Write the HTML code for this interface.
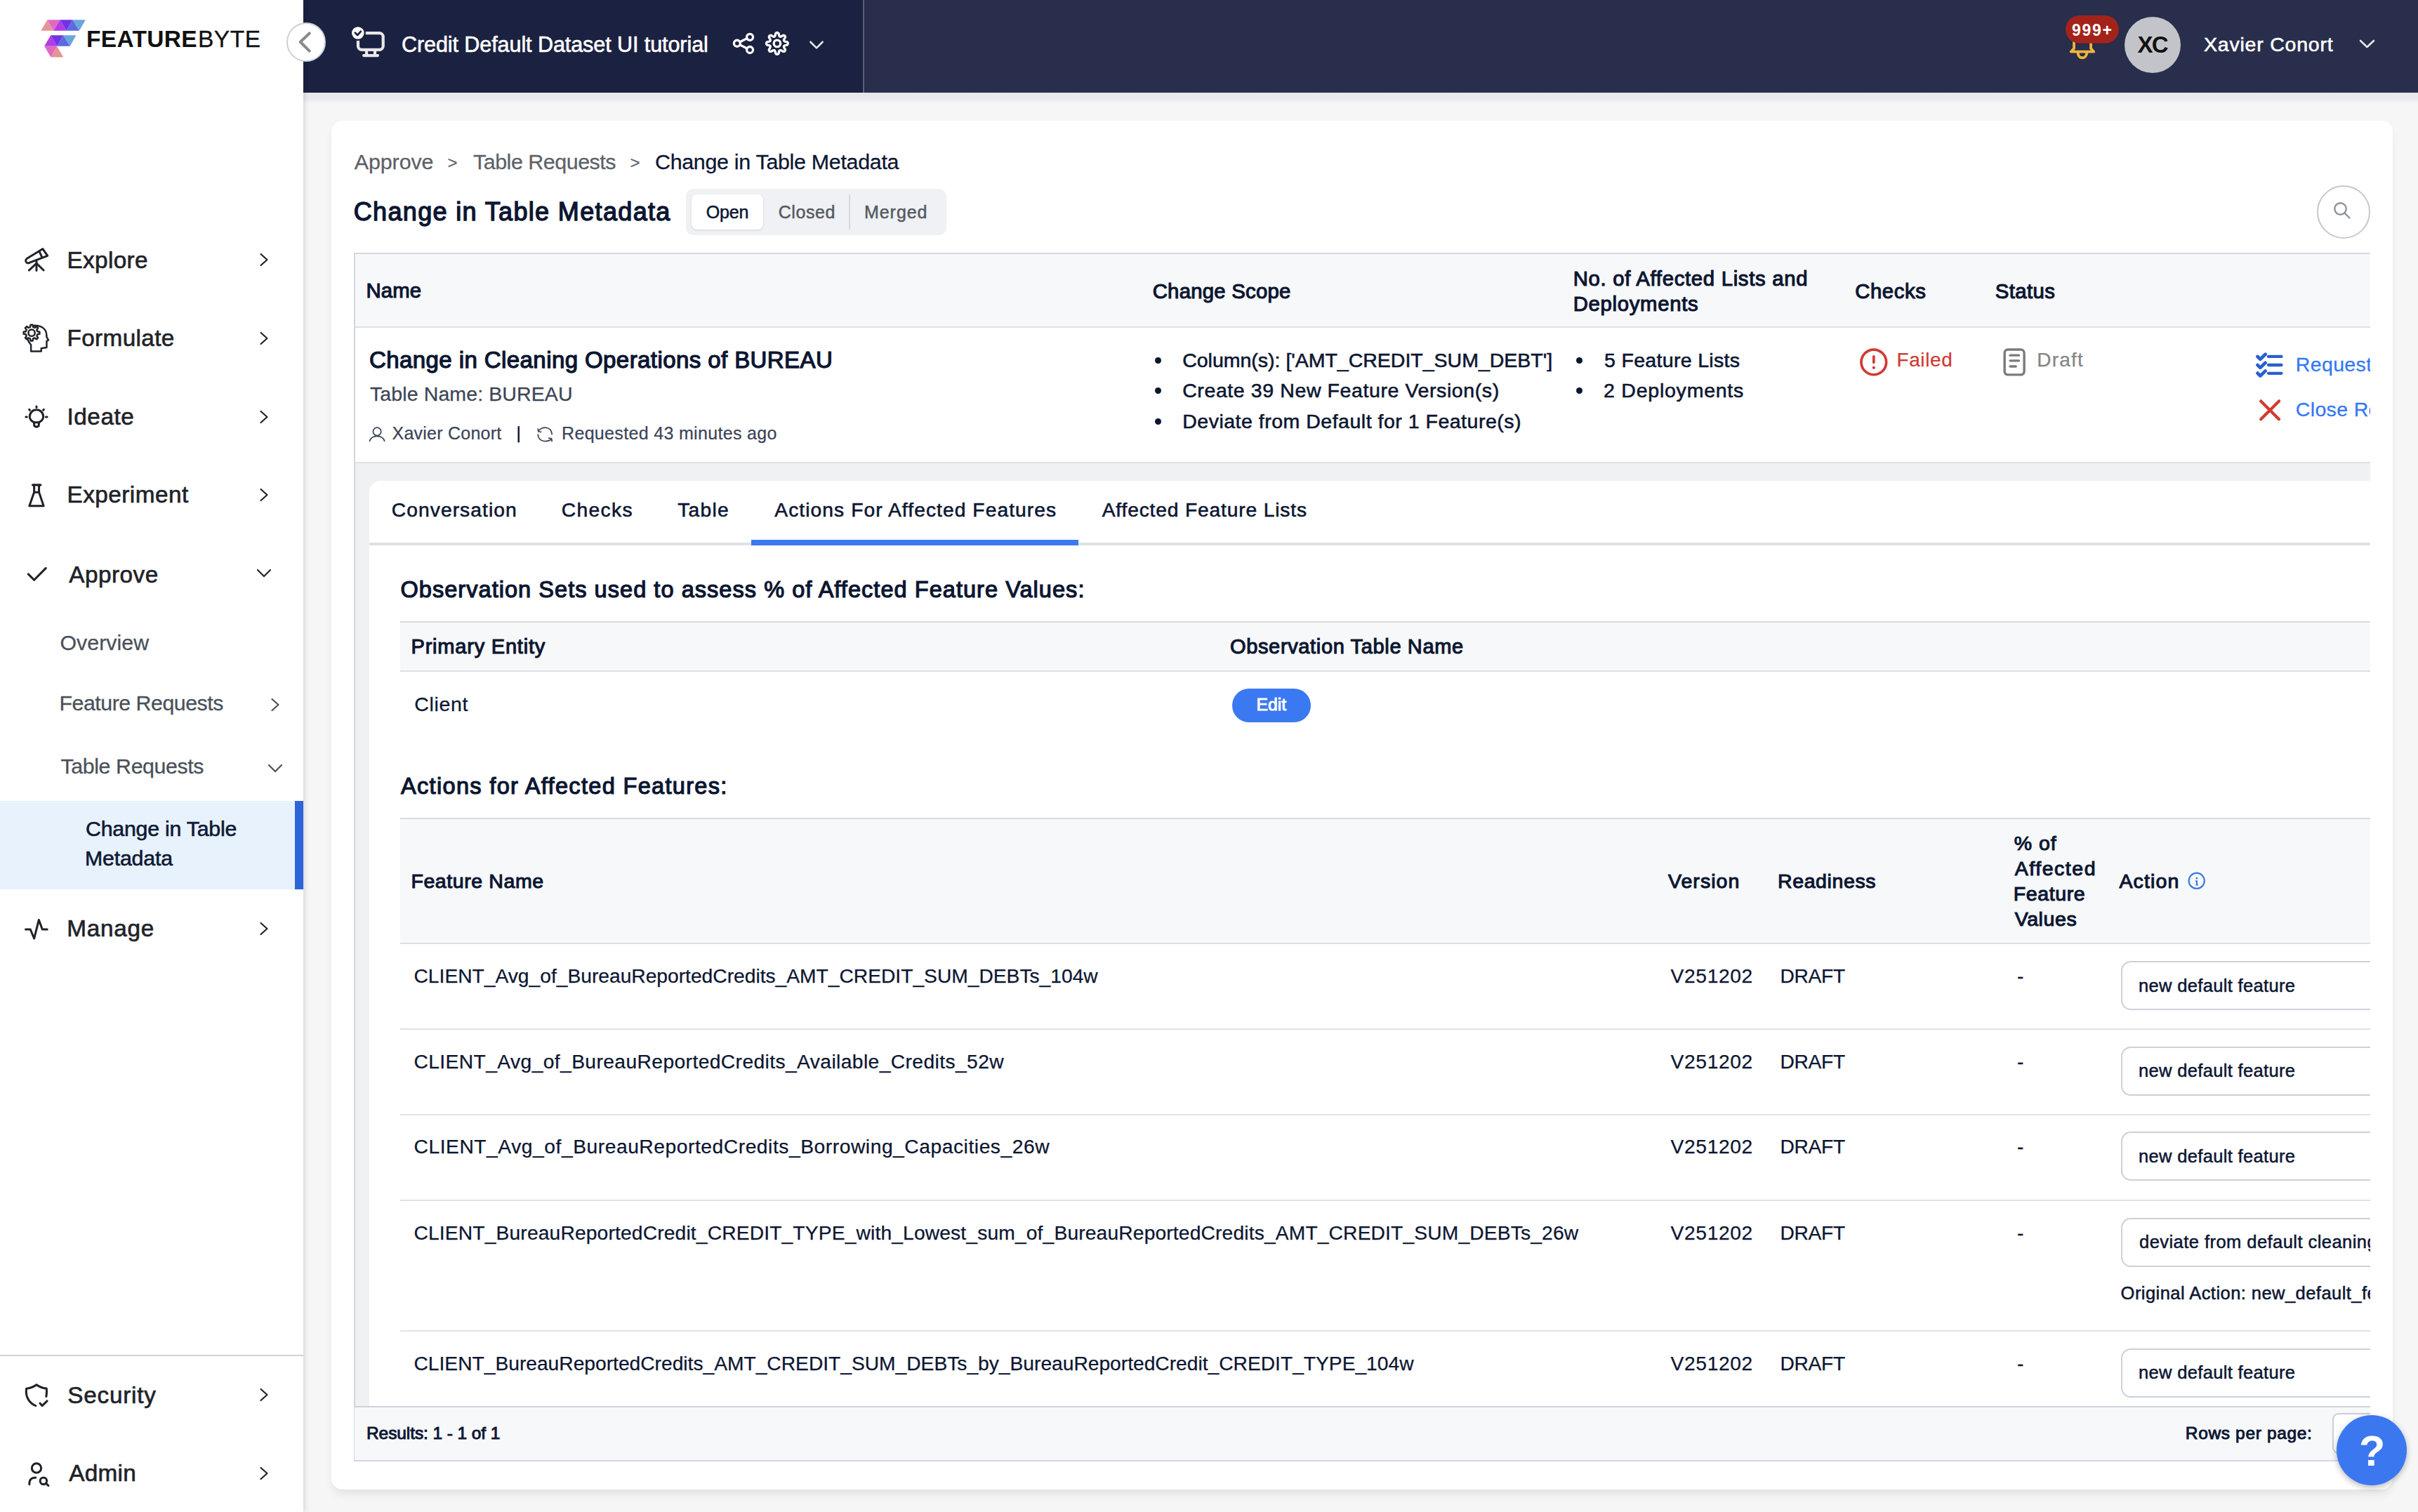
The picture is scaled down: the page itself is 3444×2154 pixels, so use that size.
<!DOCTYPE html>
<html><head><meta charset="utf-8">
<style>
html,body{margin:0;padding:0;}
body{width:3444px;height:2154px;position:relative;overflow:hidden;background:#f6f6f7;font-family:"Liberation Sans",sans-serif;}
.a{position:absolute;}
.t{position:absolute;white-space:nowrap;}
svg{position:absolute;overflow:visible;}
.sel{width:420px;height:70px;border:2px solid #ccd1d8;border-radius:14px;box-sizing:border-box;background:#fff;}
.dot{width:9px;height:9px;border-radius:50%;background:#0c1631;}
.ic{fill:none;stroke:#1f2329;stroke-width:74;stroke-linecap:round;stroke-linejoin:round;}
</style></head><body>

<!-- page shadow under header -->
<div class="a" style="left:432px;top:132px;width:3012px;height:16px;background:linear-gradient(#e6e7eb 0px,#e9eaee 9px,#f6f6f7 15px);"></div>

<!-- main card -->
<div class="a" style="left:472px;top:172px;width:2936px;height:1950px;background:#fff;border-radius:16px;box-shadow:0 9px 14px -3px rgba(0,0,0,0.085);"></div>

<!-- header -->
<div class="a" style="left:432px;top:0;width:798px;height:132px;background:#1b2140;"></div>
<div class="a" style="left:1229px;top:0;width:2px;height:132px;background:#5b6172;"></div>
<div class="a" style="left:1231px;top:0;width:2213px;height:132px;background:#282e4b;"></div>

<!-- sidebar -->
<div class="a" style="left:0;top:0;width:432px;height:2154px;background:#fff;box-shadow:1px 0 8px rgba(0,0,0,0.17);"></div>
<div class="a" style="left:0;top:1141px;width:420px;height:126px;background:#e8f2fd;"></div>
<div class="a" style="left:420px;top:1141px;width:12px;height:126px;background:#2d64d8;"></div>
<div class="a" style="left:0;top:1929.5px;width:432px;height:2px;background:#cdd2da;"></div>

<!-- logo -->
<svg style="left:50px;top:20px;" width="80" height="70" viewBox="0 0 1728 1512">
<polygon fill="#e49595" points="180,512 378,178 570,512"/>
<polygon fill="#e069c1" points="378,178 765,178 570,512"/>
<polygon fill="#b03de6" points="570,512 765,178 965,512"/>
<polygon fill="#7232e6" points="765,178 1155,178 965,512"/>
<polygon fill="#5b6ade" points="965,512 1155,178 1360,512"/>
<polygon fill="#69a5e0" points="1155,178 1550,178 1360,512"/>
<polygon fill="#b03de6" points="285,990 480,655 675,990"/>
<polygon fill="#7232e6" points="480,655 870,655 675,990"/>
<polygon fill="#5b6ade" points="675,990 870,655 1075,990"/>
<polygon fill="#69a5e0" points="870,655 1260,655 1075,990"/>
<polygon fill="#e069c1" points="285,995 675,995 485,1330"/>
<polygon fill="#e49595" points="485,1330 675,995 870,1330"/>
</svg>

<!-- collapse button -->
<div class="a" style="left:408px;top:32px;width:52px;height:52px;border-radius:50%;background:#fff;border:2px solid #cbd0d8;"></div>
<svg style="left:400px;top:20px;" width="160" height="80" viewBox="0 0 2418 1209">
<polyline points="615,415 420,600 615,795" fill="none" stroke="#8a8a8a" stroke-width="62" stroke-linecap="round" stroke-linejoin="round"/>
</svg>

<!-- monitor icon -->
<svg style="left:400px;top:20px;" width="160" height="80" viewBox="0 0 2418 1209">
<g fill="none" stroke="#e8e8e8" stroke-width="64" stroke-linecap="round" stroke-linejoin="round">
<rect x="1662" y="410" width="540" height="358" rx="80"/>
<line x1="1845" y1="780" x2="1845" y2="880"/>
<line x1="2025" y1="780" x2="2025" y2="880"/>
<line x1="1785" y1="893" x2="2085" y2="893"/>
</g>
<circle cx="1660" cy="408" r="150" fill="#fff" stroke="#1b2140" stroke-width="36"/>
<polyline points="1600,405 1650,455 1720,375" fill="none" stroke="#1b2140" stroke-width="42" stroke-linecap="round" stroke-linejoin="round"/>
</svg>

<!-- share / gear / chevron -->
<svg style="left:1030px;top:30px;" width="160" height="70" viewBox="0 0 2418 1058">
<g fill="none" stroke="#fff" stroke-width="50" stroke-linecap="round" stroke-linejoin="round">
<circle cx="300" cy="480" r="68"/>
<circle cx="575" cy="345" r="68"/>
<circle cx="575" cy="620" r="68"/>
<line x1="362" y1="450" x2="512" y2="375"/>
<line x1="362" y1="512" x2="512" y2="590"/>
<path d="M1395 482 1393 494 1386 506 1374 516 1344 521 1328 526 1317 532 1311 539 1308 547 1308 556 1311 568 1318 584 1335 608 1337 624 1334 637 1327 647 1317 654 1304 657 1288 655 1264 638 1248 631 1236 628 1227 628 1219 631 1212 637 1206 648 1201 664 1196 694 1186 706 1174 713 1162 715 1150 713 1138 706 1128 694 1123 664 1118 648 1112 637 1105 631 1097 628 1088 628 1076 631 1060 638 1036 655 1020 657 1007 654 997 647 990 637 987 624 989 608 1006 584 1013 568 1016 556 1016 547 1013 539 1007 532 996 526 980 521 950 516 938 506 931 494 929 482 931 470 938 458 950 448 980 443 996 438 1007 432 1013 425 1016 417 1016 408 1013 396 1006 380 989 356 987 340 990 327 997 317 1007 310 1020 307 1036 309 1060 326 1076 333 1088 336 1097 336 1105 333 1112 327 1118 316 1123 300 1128 270 1138 258 1150 251 1162 249 1174 251 1186 258 1196 270 1201 300 1206 316 1212 327 1219 333 1227 336 1236 336 1248 333 1264 326 1288 309 1304 307 1317 310 1327 317 1334 327 1337 340 1335 356 1318 380 1311 396 1308 408 1308 417 1311 425 1317 432 1328 438 1344 443 1374 448 1386 458 1393 470Z"/>
<circle cx="1162" cy="482" r="72"/>
<polyline points="1880,450 2010,580 2140,450" stroke="#e4e4e4" stroke-width="40"/>
</g>
</svg>

<!-- bell + badge -->
<svg style="left:2920px;top:10px;" width="120" height="90" viewBox="0 0 2016 1512">
<g fill="none" stroke="#f0b53d" stroke-width="64" stroke-linecap="round" stroke-linejoin="round">
<path d="M572 700 L572 990 L500 1070 L1045 1070 L975 990 L975 700"/>
<path d="M665 1100 Q680 1215 770 1215 Q860 1215 880 1100"/>
</g>
<rect x="370" y="200" width="1275" height="670" rx="335" fill="#a3231a"/>
</svg>
<div class="a" style="left:3026px;top:23.5px;width:80px;height:80px;border-radius:50%;background:#c3c4c9;"></div>
<svg style="left:3355px;top:50px;" width="32" height="24" viewBox="0 0 32 24">
<polyline points="7,8 16.5,17 26,8" fill="none" stroke="#e6e6e6" stroke-width="2.6" stroke-linecap="round" stroke-linejoin="round"/>
</svg>

<!-- sidebar icons -->
<svg style="left:25px;top:340px;" width="60" height="60" viewBox="0 0 1512 1512"><g class="ic">
<path d="M905 368 L1078 615 L432 862 A82 82 0 0 1 330 720 Z"/>
<line x1="790" y1="478" x2="876" y2="668"/>
<line x1="680" y1="805" x2="680" y2="1145"/>
<path d="M675 890 Q560 1000 410 1135"/><path d="M685 890 Q800 1000 935 1135"/>
</g></svg>
<svg style="left:25px;top:450px;" width="60" height="60" viewBox="0 0 1512 1512"><g class="ic" style="stroke-width:62">
<path d="M714 559 L792 572 L792 648 L714 661 L689 722 L735 786 L681 840 L617 794 L556 819 L543 897 L467 897 L454 819 L393 794 L329 840 L275 786 L321 722 L296 661 L218 648 L218 572 L296 559 L321 498 L275 434 L329 380 L393 426 L454 401 L467 323 L543 323 L556 401 L617 426 L681 380 L735 434 L689 498Z"/>
<circle cx="505" cy="610" r="118"/>
<path d="M600 345 C850 335 1040 470 1040 690 L1045 760 L1110 870 L1045 905 L1045 1135 L850 1165 L850 1270 L482 1270 L482 1040 C420 960 360 880 345 800"/>
</g></svg>
<svg style="left:25px;top:563px;" width="60" height="60" viewBox="0 0 1512 1512"><g class="ic" style="stroke-width:76">
<path d="M585 975 C480 920 435 850 435 770 A245 245 0 0 1 925 770 C925 850 880 920 775 975 Z"/>
<path d="M590 975 L600 1100 Q680 1175 760 1100 L770 975"/>
<line x1="680" y1="405" x2="680" y2="435"/><line x1="420" y1="515" x2="440" y2="540"/><line x1="940" y1="515" x2="920" y2="540"/>
<line x1="300" y1="780" x2="335" y2="780"/><line x1="1020" y1="780" x2="1060" y2="780"/>
</g></svg>
<svg style="left:25px;top:675px;" width="60" height="60" viewBox="0 0 1512 1512"><g class="ic" style="stroke-width:76">
<line x1="540" y1="400" x2="830" y2="400"/>
<path d="M595 405 L595 660 L770 660 L770 405"/>
<path d="M595 660 L425 1150 L935 1150 L770 660"/>
</g></svg>
<svg style="left:25px;top:787px;" width="60" height="60" viewBox="0 0 1512 1512"><g class="ic" style="stroke-width:77">
<polyline points="385,780 595,990 1015,565"/>
</g></svg>
<svg style="left:25px;top:1293px;" width="60" height="60" viewBox="0 0 1512 1512"><g class="ic" style="stroke-width:76">
<polyline points="290,780 460,780 595,1110 765,440 890,780 1065,780"/>
</g></svg>
<svg style="left:25px;top:1958px;" width="60" height="60" viewBox="0 0 1512 1512"><g class="ic" style="stroke-width:77">
<path d="M650 1125 C450 1050 310 850 310 620 L315 510 C450 490 560 460 680 370 C800 460 910 490 1040 505 L1045 610 C1045 690 1040 740 1030 790"/>
<polyline points="805,1035 885,1125 1060,955"/>
</g></svg>
<svg style="left:25px;top:2070px;" width="60" height="60" viewBox="0 0 1512 1512"><g class="ic" style="stroke-width:77">
<circle cx="680" cy="540" r="168"/>
<path d="M425 1125 C420 960 490 880 650 880"/>
<circle cx="930" cy="1000" r="120"/>
<line x1="1020" y1="1090" x2="1105" y2="1170"/>
</g></svg>

<!-- sidebar chevrons -->
<svg style="left:0;top:0;" width="432" height="2154" viewBox="0 0 432 2154"><g fill="none" stroke="#1f2329" stroke-width="2.2" stroke-linecap="round" stroke-linejoin="round">
<polyline points="371.5,362 380.5,370 371.5,378"/>
<polyline points="371.5,474 380.5,482 371.5,490"/>
<polyline points="371.5,586 380.5,594 371.5,602"/>
<polyline points="371.5,697 380.5,705 371.5,713"/>
<polyline points="367,812 376,821 385,812"/>
<polyline points="371.5,1315 380.5,1323 371.5,1331"/>
<polyline points="371.5,1979 380.5,1987 371.5,1995"/>
<polyline points="371.5,2091 380.5,2099 371.5,2107"/>
</g><g fill="none" stroke="#4a5058" stroke-width="2.2" stroke-linecap="round" stroke-linejoin="round">
<polyline points="387.5,996 396.5,1004 387.5,1012"/>
<polyline points="383,1090 392,1099 401,1090"/>
</g></svg>


<!-- ===== main content ===== -->
<!-- segmented control -->
<div class="a" style="left:977px;top:269px;width:371px;height:66px;background:#eff1f4;border-radius:10px;"></div>
<div class="a" style="left:985px;top:277px;width:102px;height:50px;background:#fff;border-radius:8px;box-shadow:0 1px 3px rgba(0,0,0,0.12);"></div>
<div class="a" style="left:1209px;top:277px;width:2px;height:50px;background:#d6d9de;"></div>
<!-- search -->
<div class="a" style="left:3300px;top:264px;width:72px;height:72px;border-radius:50%;border:2px solid #c5cad1;background:#fff;"></div>
<svg style="left:3320px;top:282px;" width="36" height="36" viewBox="0 0 36 36"><g fill="none" stroke="#8e949c" stroke-width="2.4" stroke-linecap="round"><circle cx="13.5" cy="15.5" r="8.2"/><line x1="19.5" y1="21.5" x2="26.5" y2="28.5"/></g></svg>

<div class="a" style="left:0;top:0;width:3376px;height:2154px;overflow:hidden;">
<!-- outer table -->
<div class="a" style="left:505px;top:360px;width:2900px;height:107px;background:#f7f8fa;border-top:2px solid #d5d9df;border-bottom:2px solid #dde0e5;box-sizing:border-box;"></div>
<div class="a" style="left:504px;top:360px;width:2px;height:1722px;background:#d2d6dc;"></div>
<div class="a" style="left:505px;top:658px;width:2900px;height:2px;background:#dde0e5;"></div>
<div class="a" style="left:506px;top:660px;width:2900px;height:1344px;background:#f0f1f3;"></div>
<div class="a" style="left:526px;top:685px;width:2900px;height:1319px;background:#fff;border-top-left-radius:16px;"></div>
<!-- tabs -->
<div class="a" style="left:526px;top:773px;width:2900px;height:4px;background:#dfe2e7;"></div>
<div class="a" style="left:1070px;top:769px;width:466px;height:8px;background:#3b7af0;"></div>
<!-- obs table -->
<div class="a" style="left:570px;top:885px;width:2900px;height:72px;background:#f7f8fa;border-top:2px solid #d8dce2;border-bottom:2px solid #dcdfe4;box-sizing:border-box;"></div>
<div class="a" style="left:1755px;top:981px;width:112px;height:48px;background:#3a79f2;border-radius:24px;"></div>
<!-- features table -->
<div class="a" style="left:570px;top:1165px;width:2900px;height:180px;background:#f7f8fa;border-top:2px solid #d8dce2;border-bottom:2px solid #dcdfe4;box-sizing:border-box;"></div>
<div class="a" style="left:570px;top:1465px;width:2900px;height:2px;background:#dfe2e7;"></div>
<div class="a" style="left:570px;top:1587px;width:2900px;height:2px;background:#dfe2e7;"></div>
<div class="a" style="left:570px;top:1708.5px;width:2900px;height:2px;background:#dfe2e7;"></div>
<div class="a" style="left:570px;top:1894.5px;width:2900px;height:2px;background:#dfe2e7;"></div>
<div class="a sel" style="left:3021px;top:1369px;"></div>
<div class="a sel" style="left:3021px;top:1490.5px;"></div>
<div class="a sel" style="left:3021px;top:1612px;"></div>
<div class="a sel" style="left:3021px;top:1734.5px;"></div>
<div class="a sel" style="left:3021px;top:1920.5px;"></div>
<!-- footer -->
<div class="a" style="left:505px;top:2003px;width:2900px;height:79px;background:#f7f8fa;border-top:2px solid #cfd4da;border-bottom:2px solid #d5d9df;box-sizing:border-box;"></div>
<div class="a" style="left:3322px;top:2013px;width:120px;height:58px;background:#fff;border:2px solid #c9ced6;border-radius:9px;box-sizing:border-box;"></div>

<!-- bullets -->
<div class="a dot" style="left:1645px;top:509px;"></div>
<div class="a dot" style="left:1645px;top:552px;"></div>
<div class="a dot" style="left:1645px;top:595.5px;"></div>
<div class="a dot" style="left:2245px;top:509px;"></div>
<div class="a dot" style="left:2245px;top:552px;"></div>

<!-- failed icon -->
<svg style="left:2640px;top:490px;" width="260" height="60" viewBox="0 0 2418 558"><g fill="none" stroke="#d03b33" stroke-width="34" stroke-linecap="round"><circle cx="268" cy="241" r="166"/><line x1="268" y1="165" x2="268" y2="245"/></g><circle cx="268" cy="315" r="20" fill="#d03b33"/>
<g fill="none" stroke="#7b7b7b" stroke-width="32" stroke-linecap="round" stroke-linejoin="round"><rect x="2001" y="75" width="260" height="333" rx="45"/><line x1="2075" y1="150" x2="2190" y2="150"/><line x1="2075" y1="222" x2="2190" y2="222"/><line x1="2075" y1="297" x2="2150" y2="297"/></g></svg>
<!-- request / close icons -->
<svg style="left:2880px;top:480px;" width="520" height="140" viewBox="0 0 2418 651"><g fill="none" stroke="#2a5fd0" stroke-width="22" stroke-linecap="round" stroke-linejoin="round">
<polyline points="1560,130 1578,148 1612,115"/><polyline points="1560,186 1578,204 1612,171"/><polyline points="1560,240 1578,258 1612,225"/>
<g stroke-width="20"><line x1="1632" y1="130" x2="1718" y2="130"/><line x1="1632" y1="186" x2="1718" y2="186"/><line x1="1632" y1="241" x2="1718" y2="241"/></g>
</g><g fill="none" stroke="#d13b33" stroke-width="20" stroke-linecap="round"><line x1="1582" y1="425" x2="1702" y2="545"/><line x1="1702" y1="425" x2="1582" y2="545"/></g></svg>
<!-- person / sync -->
<svg style="left:515px;top:595px;" width="300" height="50" viewBox="0 0 2418 403"><g fill="none" stroke="#3b4357" stroke-width="14" stroke-linecap="round">
<circle cx="178" cy="160" r="46"/><path d="M93 268 Q110 212 178 212 Q246 212 263 268"/>
<path d="M2030 150 Q2070 110 2120 115 Q2180 125 2185 190"/><path d="M2180 250 Q2140 275 2095 270 Q2030 260 2025 195"/>
<polyline points="2025,130 2030,160 2060,165"/><polyline points="2185,270 2180,240 2150,235"/>
</g><line x1="1803" y1="98" x2="1803" y2="285" stroke="#101a36" stroke-width="20"/></svg>
<!-- info -->
<svg style="left:3000px;top:1230px;" width="160" height="60" viewBox="0 0 2418 907"><g fill="none" stroke="#3a7be2" stroke-width="34"><circle cx="1945" cy="375" r="168"/></g><circle cx="1948" cy="320" r="20" fill="#3a7be2"/><path d="M1920 380 L1950 380 L1950 460 M1925 460 L1975 460" fill="none" stroke="#3a7be2" stroke-width="30"/></svg>
</div>

<!-- help button -->
<div class="a" style="left:3328px;top:2016px;width:100px;height:100px;border-radius:50%;background:#3b78f0;box-shadow:0 3px 8px rgba(0,0,0,0.28);"></div>

<div class="a" style="left:0;top:0;width:3376px;height:2154px;overflow:hidden;">
<div class="t" id="lg1" style="left:123.0px;top:38.6px;font-size:33.5px;line-height:33.5px;color:#111111;font-weight:700;letter-spacing:0.299px;">FEATURE</div>
<div class="t" id="lg2" style="left:282.0px;top:38.6px;font-size:33.5px;line-height:33.5px;color:#111111;-webkit-text-stroke:0.30px #111111;letter-spacing:0.503px;">BYTE</div>
<div class="t" id="htitle" style="left:572.0px;top:48.2px;font-size:30.5px;line-height:30.5px;color:#ffffff;-webkit-text-stroke:0.61px #ffffff;letter-spacing:-0.068px;">Credit Default Dataset UI tutorial</div>
<div class="t" id="badge" style="left:2951.0px;top:31.9px;font-size:23px;line-height:23px;color:#ffffff;font-weight:700;letter-spacing:1.733px;">999+</div>
<div class="t" id="xc" style="left:3044.5px;top:47.2px;font-size:33px;line-height:33px;color:#111111;font-weight:700;letter-spacing:-1.764px;">XC</div>
<div class="t" id="hname" style="left:3139.0px;top:49.4px;font-size:28.5px;line-height:28.5px;color:#ffffff;-webkit-text-stroke:0.57px #ffffff;letter-spacing:0.788px;">Xavier Conort</div>
<div class="t" id="s_explore" style="left:95.5px;top:353.5px;font-size:33.3px;line-height:33.3px;color:#1f2329;-webkit-text-stroke:0.67px #1f2329;letter-spacing:0.349px;">Explore</div>
<div class="t" id="s_formulate" style="left:95.5px;top:464.8px;font-size:33.3px;line-height:33.3px;color:#1f2329;-webkit-text-stroke:0.67px #1f2329;letter-spacing:0.376px;">Formulate</div>
<div class="t" id="s_ideate" style="left:95.5px;top:576.8px;font-size:33.3px;line-height:33.3px;color:#1f2329;-webkit-text-stroke:0.67px #1f2329;letter-spacing:0.544px;">Ideate</div>
<div class="t" id="s_experiment" style="left:95.5px;top:688.3px;font-size:33.3px;line-height:33.3px;color:#1f2329;-webkit-text-stroke:0.67px #1f2329;letter-spacing:0.477px;">Experiment</div>
<div class="t" id="s_approve" style="left:98.2px;top:802.4px;font-size:33.3px;line-height:33.3px;color:#1f2329;-webkit-text-stroke:0.67px #1f2329;letter-spacing:0.494px;">Approve</div>
<div class="t" id="s_manage" style="left:95.2px;top:1306.4px;font-size:33.3px;line-height:33.3px;color:#1f2329;-webkit-text-stroke:0.67px #1f2329;letter-spacing:0.754px;">Manage</div>
<div class="t" id="s_security" style="left:96.2px;top:1970.8px;font-size:33.3px;line-height:33.3px;color:#1f2329;-webkit-text-stroke:0.67px #1f2329;letter-spacing:0.774px;">Security</div>
<div class="t" id="s_admin" style="left:98.2px;top:2082.4px;font-size:33.3px;line-height:33.3px;color:#1f2329;-webkit-text-stroke:0.67px #1f2329;letter-spacing:0.277px;">Admin</div>
<div class="t" id="s_overview" style="left:85.5px;top:901.0px;font-size:30.3px;line-height:30.3px;color:#4a5058;-webkit-text-stroke:0.27px #4a5058;letter-spacing:0.050px;">Overview</div>
<div class="t" id="s_freq" style="left:84.5px;top:987.1px;font-size:30.3px;line-height:30.3px;color:#4a5058;-webkit-text-stroke:0.27px #4a5058;letter-spacing:-0.467px;">Feature Requests</div>
<div class="t" id="s_treq" style="left:86.5px;top:1077.3px;font-size:30.3px;line-height:30.3px;color:#4a5058;-webkit-text-stroke:0.27px #4a5058;letter-spacing:-0.371px;">Table Requests</div>
<div class="t" id="s_cit1" style="left:122.0px;top:1166.0px;font-size:30.3px;line-height:30.3px;color:#0e1a35;-webkit-text-stroke:0.61px #0e1a35;letter-spacing:-0.223px;">Change in Table</div>
<div class="t" id="s_cit2" style="left:121.0px;top:1208.3px;font-size:30.3px;line-height:30.3px;color:#0e1a35;-webkit-text-stroke:0.61px #0e1a35;letter-spacing:-0.187px;">Metadata</div>
<div class="t" id="bc1" style="left:504.7px;top:214.7px;font-size:30.4px;line-height:30.4px;color:#5d6168;-webkit-text-stroke:0.27px #5d6168;letter-spacing:-0.063px;">Approve</div>
<div class="t" id="bcg1" style="left:637.5px;top:220.1px;font-size:24px;line-height:24px;color:#5d6168;-webkit-text-stroke:0.22px #5d6168;letter-spacing:2.574px;">&gt;</div>
<div class="t" id="bc2" style="left:674.0px;top:214.7px;font-size:30.4px;line-height:30.4px;color:#5d6168;-webkit-text-stroke:0.27px #5d6168;letter-spacing:-0.458px;">Table Requests</div>
<div class="t" id="bcg2" style="left:897.5px;top:220.1px;font-size:24px;line-height:24px;color:#5d6168;-webkit-text-stroke:0.22px #5d6168;letter-spacing:5.974px;">&gt;</div>
<div class="t" id="bc3" style="left:933.0px;top:214.7px;font-size:30.4px;line-height:30.4px;color:#0c1631;-webkit-text-stroke:0.27px #0c1631;letter-spacing:-0.297px;">Change in Table Metadata</div>
<div class="t" id="title" style="left:503.7px;top:284.2px;font-size:36px;line-height:36px;color:#0c1631;-webkit-text-stroke:1.37px #0c1631;letter-spacing:1.350px;">Change in Table Metadata</div>
<div class="t" id="seg1" style="left:1005.7px;top:289.5px;font-size:25px;line-height:25px;color:#0c1631;-webkit-text-stroke:0.50px #0c1631;letter-spacing:-0.124px;">Open</div>
<div class="t" id="seg2" style="left:1108.7px;top:289.5px;font-size:25px;line-height:25px;color:#555a63;-webkit-text-stroke:0.50px #555a63;letter-spacing:0.594px;">Closed</div>
<div class="t" id="seg3" style="left:1231.0px;top:289.5px;font-size:25px;line-height:25px;color:#555a63;-webkit-text-stroke:0.50px #555a63;letter-spacing:0.947px;">Merged</div>
<div class="t" id="th1" style="left:521.6px;top:399.0px;font-size:29.3px;line-height:29.3px;color:#0c1631;-webkit-text-stroke:1.11px #0c1631;letter-spacing:0.120px;">Name</div>
<div class="t" id="th2" style="left:1641.7px;top:399.6px;font-size:29.3px;line-height:29.3px;color:#0c1631;-webkit-text-stroke:1.11px #0c1631;letter-spacing:0.251px;">Change Scope</div>
<div class="t" id="th3a" style="left:2240.7px;top:381.8px;font-size:29.3px;line-height:29.3px;color:#0c1631;-webkit-text-stroke:1.11px #0c1631;letter-spacing:0.699px;">No. of Affected Lists and</div>
<div class="t" id="th3b" style="left:2240.7px;top:417.5px;font-size:29.3px;line-height:29.3px;color:#0c1631;-webkit-text-stroke:1.11px #0c1631;letter-spacing:0.699px;">Deployments</div>
<div class="t" id="th4" style="left:2642.2px;top:399.6px;font-size:29.3px;line-height:29.3px;color:#0c1631;-webkit-text-stroke:1.11px #0c1631;letter-spacing:0.605px;">Checks</div>
<div class="t" id="th5" style="left:2841.7px;top:399.6px;font-size:29.3px;line-height:29.3px;color:#0c1631;-webkit-text-stroke:1.11px #0c1631;letter-spacing:0.422px;">Status</div>
<div class="t" id="rt" style="left:526.0px;top:495.9px;font-size:33px;line-height:33px;color:#0c1631;-webkit-text-stroke:1.25px #0c1631;letter-spacing:0.419px;">Change in Cleaning Operations of BUREAU</div>
<div class="t" id="rtn" style="left:527.0px;top:546.5px;font-size:28.5px;line-height:28.5px;color:#3d4557;-webkit-text-stroke:0.26px #3d4557;letter-spacing:0.107px;">Table Name: BUREAU</div>
<div class="t" id="ru" style="left:558.5px;top:605.4px;font-size:25px;line-height:25px;color:#3b4357;-webkit-text-stroke:0.22px #3b4357;letter-spacing:0.245px;">Xavier Conort</div>
<div class="t" id="rr" style="left:800.0px;top:605.4px;font-size:25px;line-height:25px;color:#3b4357;-webkit-text-stroke:0.22px #3b4357;letter-spacing:0.334px;">Requested 43 minutes ago</div>
<div class="t" id="sc1" style="left:1684.2px;top:498.7px;font-size:28.5px;line-height:28.5px;color:#0c1631;-webkit-text-stroke:0.57px #0c1631;letter-spacing:-0.007px;">Column(s): ['AMT_CREDIT_SUM_DEBT']</div>
<div class="t" id="sc2" style="left:1684.2px;top:541.7px;font-size:28.5px;line-height:28.5px;color:#0c1631;-webkit-text-stroke:0.57px #0c1631;letter-spacing:0.599px;">Create 39 New Feature Version(s)</div>
<div class="t" id="sc3" style="left:1684.2px;top:585.5px;font-size:28.5px;line-height:28.5px;color:#0c1631;-webkit-text-stroke:0.57px #0c1631;letter-spacing:0.506px;">Deviate from Default for 1 Feature(s)</div>
<div class="t" id="nl1" style="left:2285.0px;top:498.7px;font-size:28.5px;line-height:28.5px;color:#0c1631;-webkit-text-stroke:0.57px #0c1631;letter-spacing:0.328px;">5 Feature Lists</div>
<div class="t" id="nl2" style="left:2284.0px;top:541.7px;font-size:28.5px;line-height:28.5px;color:#0c1631;-webkit-text-stroke:0.57px #0c1631;letter-spacing:0.768px;">2 Deployments</div>
<div class="t" id="failed" style="left:2701.4px;top:499.1px;font-size:28px;line-height:28px;color:#d03b33;-webkit-text-stroke:0.25px #d03b33;letter-spacing:0.643px;">Failed</div>
<div class="t" id="draft" style="left:2901.2px;top:499.3px;font-size:28px;line-height:28px;color:#858585;-webkit-text-stroke:0.25px #858585;letter-spacing:1.223px;">Draft</div>
<div class="t" id="req" style="left:3269.8px;top:505.2px;font-size:28.5px;line-height:28.5px;color:#3478f4;-webkit-text-stroke:0.26px #3478f4;letter-spacing:0.350px;">Request Approval</div>
<div class="t" id="close" style="left:3269.8px;top:568.9px;font-size:28.5px;line-height:28.5px;color:#3478f4;-webkit-text-stroke:0.26px #3478f4;letter-spacing:0.350px;">Close Request</div>
<div class="t" id="tab1" style="left:557.8px;top:712.1px;font-size:28.2px;line-height:28.2px;color:#0c1631;-webkit-text-stroke:0.56px #0c1631;letter-spacing:1.073px;">Conversation</div>
<div class="t" id="tab2" style="left:799.8px;top:712.1px;font-size:28.2px;line-height:28.2px;color:#0c1631;-webkit-text-stroke:0.56px #0c1631;letter-spacing:1.358px;">Checks</div>
<div class="t" id="tab3" style="left:965.2px;top:712.1px;font-size:28.2px;line-height:28.2px;color:#0c1631;-webkit-text-stroke:0.56px #0c1631;letter-spacing:1.275px;">Table</div>
<div class="t" id="tab4" style="left:1103.3px;top:712.1px;font-size:28.2px;line-height:28.2px;color:#0c1631;-webkit-text-stroke:0.56px #0c1631;letter-spacing:1.071px;">Actions For Affected Features</div>
<div class="t" id="tab5" style="left:1569.7px;top:712.1px;font-size:28.2px;line-height:28.2px;color:#0c1631;-webkit-text-stroke:0.56px #0c1631;letter-spacing:0.839px;">Affected Feature Lists</div>
<div class="t" id="hobs" style="left:570.5px;top:823.7px;font-size:32.5px;line-height:32.5px;color:#0c1631;-webkit-text-stroke:1.23px #0c1631;letter-spacing:1.047px;">Observation Sets used to assess % of Affected Feature Values:</div>
<div class="t" id="oth1" style="left:585.5px;top:906.7px;font-size:29px;line-height:29px;color:#0c1631;-webkit-text-stroke:1.10px #0c1631;letter-spacing:0.792px;">Primary Entity</div>
<div class="t" id="oth2" style="left:1752.0px;top:906.7px;font-size:29px;line-height:29px;color:#0c1631;-webkit-text-stroke:1.10px #0c1631;letter-spacing:0.644px;">Observation Table Name</div>
<div class="t" id="oclient" style="left:590.3px;top:988.7px;font-size:28.5px;line-height:28.5px;color:#0c1631;-webkit-text-stroke:0.26px #0c1631;letter-spacing:0.667px;">Client</div>
<div class="t" id="edit" style="left:1789.6px;top:992.1px;font-size:24.7px;line-height:24.7px;color:#ffffff;-webkit-text-stroke:0.94px #ffffff;letter-spacing:0.014px;">Edit</div>
<div class="t" id="hact" style="left:571.0px;top:1104.2px;font-size:32.5px;line-height:32.5px;color:#0c1631;-webkit-text-stroke:1.23px #0c1631;letter-spacing:1.333px;">Actions for Affected Features:</div>
<div class="t" id="fth1" style="left:585.4px;top:1241.4px;font-size:28.5px;line-height:28.5px;color:#0c1631;-webkit-text-stroke:1.08px #0c1631;letter-spacing:0.601px;">Feature Name</div>
<div class="t" id="fth2" style="left:2376.0px;top:1241.4px;font-size:28.5px;line-height:28.5px;color:#0c1631;-webkit-text-stroke:1.08px #0c1631;letter-spacing:1.040px;">Version</div>
<div class="t" id="fth3" style="left:2532.0px;top:1241.4px;font-size:28.5px;line-height:28.5px;color:#0c1631;-webkit-text-stroke:1.08px #0c1631;letter-spacing:0.604px;">Readiness</div>
<div class="t" id="fthp1" style="left:2868.7px;top:1187.3px;font-size:28.5px;line-height:28.5px;color:#0c1631;-webkit-text-stroke:1.08px #0c1631;letter-spacing:0.979px;">% of</div>
<div class="t" id="fthp2" style="left:2869.7px;top:1222.8px;font-size:28.5px;line-height:28.5px;color:#0c1631;-webkit-text-stroke:1.08px #0c1631;letter-spacing:1.542px;">Affected</div>
<div class="t" id="fthp3" style="left:2867.7px;top:1259.2px;font-size:28.5px;line-height:28.5px;color:#0c1631;-webkit-text-stroke:1.08px #0c1631;letter-spacing:0.626px;">Feature</div>
<div class="t" id="fthp4" style="left:2869.7px;top:1295.1px;font-size:28.5px;line-height:28.5px;color:#0c1631;-webkit-text-stroke:1.08px #0c1631;letter-spacing:0.596px;">Values</div>
<div class="t" id="fth5" style="left:3018.5px;top:1240.9px;font-size:28.5px;line-height:28.5px;color:#0c1631;-webkit-text-stroke:1.08px #0c1631;letter-spacing:1.108px;">Action</div>
<div class="t" id="fn0" style="left:589.5px;top:1375.9px;font-size:28.2px;line-height:28.2px;color:#0c1631;-webkit-text-stroke:0.25px #0c1631;letter-spacing:0.004px;">CLIENT_Avg_of_BureauReportedCredits_AMT_CREDIT_SUM_DEBTs_104w</div>
<div class="t" id="fv0" style="left:2379.6px;top:1375.9px;font-size:28.2px;line-height:28.2px;color:#0c1631;-webkit-text-stroke:0.25px #0c1631;letter-spacing:0.636px;">V251202</div>
<div class="t" id="fd0" style="left:2535.5px;top:1375.9px;font-size:28.2px;line-height:28.2px;color:#0c1631;-webkit-text-stroke:0.25px #0c1631;letter-spacing:-0.315px;">DRAFT</div>
<div class="t" id="fx0" style="left:2873.0px;top:1375.9px;font-size:28.2px;line-height:28.2px;color:#0c1631;-webkit-text-stroke:0.25px #0c1631;">-</div>
<div class="t" id="fs0" style="left:3046.0px;top:1391.7px;font-size:25.5px;line-height:25.5px;color:#0c1631;-webkit-text-stroke:0.51px #0c1631;letter-spacing:0.338px;">new default feature</div>
<div class="t" id="fn1" style="left:589.5px;top:1497.8px;font-size:28.2px;line-height:28.2px;color:#0c1631;-webkit-text-stroke:0.25px #0c1631;letter-spacing:0.415px;">CLIENT_Avg_of_BureauReportedCredits_Available_Credits_52w</div>
<div class="t" id="fv1" style="left:2379.6px;top:1497.8px;font-size:28.2px;line-height:28.2px;color:#0c1631;-webkit-text-stroke:0.25px #0c1631;letter-spacing:0.636px;">V251202</div>
<div class="t" id="fd1" style="left:2535.5px;top:1497.8px;font-size:28.2px;line-height:28.2px;color:#0c1631;-webkit-text-stroke:0.25px #0c1631;letter-spacing:-0.315px;">DRAFT</div>
<div class="t" id="fx1" style="left:2873.0px;top:1497.8px;font-size:28.2px;line-height:28.2px;color:#0c1631;-webkit-text-stroke:0.25px #0c1631;">-</div>
<div class="t" id="fs1" style="left:3046.0px;top:1513.2px;font-size:25.5px;line-height:25.5px;color:#0c1631;-webkit-text-stroke:0.51px #0c1631;letter-spacing:0.338px;">new default feature</div>
<div class="t" id="fn2" style="left:589.5px;top:1619.3px;font-size:28.2px;line-height:28.2px;color:#0c1631;-webkit-text-stroke:0.25px #0c1631;letter-spacing:0.557px;">CLIENT_Avg_of_BureauReportedCredits_Borrowing_Capacities_26w</div>
<div class="t" id="fv2" style="left:2379.6px;top:1619.3px;font-size:28.2px;line-height:28.2px;color:#0c1631;-webkit-text-stroke:0.25px #0c1631;letter-spacing:0.636px;">V251202</div>
<div class="t" id="fd2" style="left:2535.5px;top:1619.3px;font-size:28.2px;line-height:28.2px;color:#0c1631;-webkit-text-stroke:0.25px #0c1631;letter-spacing:-0.315px;">DRAFT</div>
<div class="t" id="fx2" style="left:2873.0px;top:1619.3px;font-size:28.2px;line-height:28.2px;color:#0c1631;-webkit-text-stroke:0.25px #0c1631;">-</div>
<div class="t" id="fs2" style="left:3046.0px;top:1634.7px;font-size:25.5px;line-height:25.5px;color:#0c1631;-webkit-text-stroke:0.51px #0c1631;letter-spacing:0.338px;">new default feature</div>
<div class="t" id="fn3" style="left:589.5px;top:1741.6px;font-size:28.2px;line-height:28.2px;color:#0c1631;-webkit-text-stroke:0.25px #0c1631;letter-spacing:0.161px;">CLIENT_BureauReportedCredit_CREDIT_TYPE_with_Lowest_sum_of_BureauReportedCredits_AMT_CREDIT_SUM_DEBTs_26w</div>
<div class="t" id="fv3" style="left:2379.6px;top:1741.6px;font-size:28.2px;line-height:28.2px;color:#0c1631;-webkit-text-stroke:0.25px #0c1631;letter-spacing:0.636px;">V251202</div>
<div class="t" id="fd3" style="left:2535.5px;top:1741.6px;font-size:28.2px;line-height:28.2px;color:#0c1631;-webkit-text-stroke:0.25px #0c1631;letter-spacing:-0.315px;">DRAFT</div>
<div class="t" id="fx3" style="left:2873.0px;top:1741.6px;font-size:28.2px;line-height:28.2px;color:#0c1631;-webkit-text-stroke:0.25px #0c1631;">-</div>
<div class="t" id="fs3" style="left:3047.0px;top:1757.2px;font-size:25.5px;line-height:25.5px;color:#0c1631;-webkit-text-stroke:0.51px #0c1631;letter-spacing:0.450px;">deviate from default cleaning</div>
<div class="t" id="fn4" style="left:589.5px;top:1927.7px;font-size:28.2px;line-height:28.2px;color:#0c1631;-webkit-text-stroke:0.25px #0c1631;letter-spacing:-0.001px;">CLIENT_BureauReportedCredits_AMT_CREDIT_SUM_DEBTs_by_BureauReportedCredit_CREDIT_TYPE_104w</div>
<div class="t" id="fv4" style="left:2379.6px;top:1927.7px;font-size:28.2px;line-height:28.2px;color:#0c1631;-webkit-text-stroke:0.25px #0c1631;letter-spacing:0.636px;">V251202</div>
<div class="t" id="fd4" style="left:2535.5px;top:1927.7px;font-size:28.2px;line-height:28.2px;color:#0c1631;-webkit-text-stroke:0.25px #0c1631;letter-spacing:-0.315px;">DRAFT</div>
<div class="t" id="fx4" style="left:2873.0px;top:1927.7px;font-size:28.2px;line-height:28.2px;color:#0c1631;-webkit-text-stroke:0.25px #0c1631;">-</div>
<div class="t" id="fs4" style="left:3046.0px;top:1943.2px;font-size:25.5px;line-height:25.5px;color:#0c1631;-webkit-text-stroke:0.51px #0c1631;letter-spacing:0.338px;">new default feature</div>
<div class="t" id="orig" style="left:3020.6px;top:1829.8px;font-size:25.5px;line-height:25.5px;color:#0c1631;-webkit-text-stroke:0.51px #0c1631;letter-spacing:0.450px;">Original Action: new_default_feature</div>
<div class="t" id="results" style="left:522.0px;top:2030.0px;font-size:24.5px;line-height:24.5px;color:#0c1631;-webkit-text-stroke:0.93px #0c1631;letter-spacing:-0.088px;">Results: 1 - 1 of 1</div>
<div class="t" id="rpp" style="left:3112.8px;top:2030.3px;font-size:24.5px;line-height:24.5px;color:#0c1631;-webkit-text-stroke:0.93px #0c1631;letter-spacing:0.649px;">Rows per page:</div>
</div>
<div class="t" id="help" style="left:3360.0px;top:2037.1px;font-size:61px;line-height:61px;color:#ffffff;font-weight:700;letter-spacing:65.800px;">?</div>

</body></html>
